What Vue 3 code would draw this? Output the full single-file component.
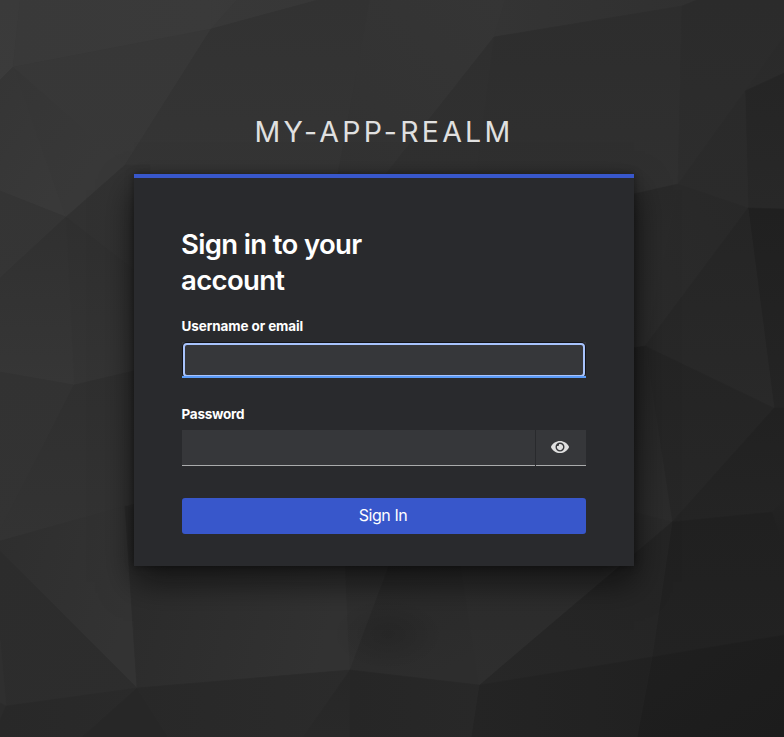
<script setup>
import { ref } from 'vue'

const username = ref('')
const password = ref('')
const revealed = ref(false)

// Each facet: outline, start colour, end colour, gradient direction (x1 y1 x2 y2)
const facets = [
  ['0,0 20,0 13,67 0,80', '#3a3a3a', '#3b3b3b', '0 0 0 1'],
  ['20,0 212,0 211,29 13,67', '#393939', '#3a3a3a', '0 0 1 0'],
  ['212,0 237,0 211,29', '#3a3a3a', '#393939', '0 0 1 0'],
  ['237,0 318,0 211,29', '#383838', '#373737', '0 0 1 0'],
  ['0,80 13,67 66,217 0,191', '#353535', '#393939', '0 0 .6 1'],
  ['13,67 211,29 125,165 66,217', '#373737', '#383838', '0 0 0 1'],
  ['13,67 125,165 66,217', '#353535', '#383838', '0 0 .7 .7'],
  ['211,29 318,0 370,0 336,184 134,184 125,165', '#323232', '#353535', '0 0 0 1'],
  ['370,0 505,0 494,37 378,184 336,184', '#323232', '#353535', '0 1 1 0'],
  ['505,0 697,0 682,6 494,37', '#343434', '#303030', '0 0 1 0'],
  ['494,37 475,184 378,184', '#2f2f2f', '#303030', '0 0 0 1'],
  ['494,37 682,6 678,184 634,195 475,184', '#2d2d2d', '#303030', '0 0 0 1'],
  ['682,6 697,0 784,0 784,36 745,91 678,184', '#2b2b2b', '#2d2d2d', '0 0 0 1'],
  ['784,36 784,73 745,91', '#2a2a2a', '#2b2b2b', '0 0 0 1'],
  ['745,91 784,73 784,209 748,208', '#252525', '#282828', '0 0 0 1'],
  ['745,91 748,208 678,184', '#2a2a2a', '#2b2b2b', '0 0 0 1'],
  ['678,184 748,208 645,346', '#282828', '#2b2b2b', '1 0 0 1'],
  ['678,184 645,346 620,350 620,197', '#292929', '#2c2c2c', '0 0 0 1'],
  ['748,208 784,209 784,408 774,408', '#202020', '#242424', '0 0 0 1'],
  ['748,208 774,408 645,346', '#252525', '#292929', '0 0 0 1'],
  ['645,346 774,408 672,522', '#242424', '#272727', '0 0 0 1'],
  ['620,350 645,346 672,522 620,508', '#242424', '#2c2c2c', '0 0 0 1'],
  ['774,408 784,408 784,500 772,512 672,522', '#212121', '#242424', '0 0 0 1'],
  ['784,500 784,545 772,512', '#232323', '#202020', '0 0 0 1'],
  ['620,508 672,522 620,565', '#2a2a2a', '#292929', '0 0 0 1'],
  ['672,522 772,512 784,545 784,635 652,657', '#202020', '#222222', '0 0 0 1'],
  ['672,522 652,657 479,685', '#242424', '#272727', '1 0 0 1'],
  ['652,657 784,635 784,737 637,737', '#1f1f1f', '#1c1c1c', '0 0 1 1'],
  ['479,685 652,657 637,737 471,737', '#242424', '#212121', '0 0 1 0'],
  ['66,217 125,165 150,165 150,282', '#313131', '#323232', '0 0 1 0'],
  ['66,217 150,282 150,367 74,385', '#2f2f2f', '#343434', '0 0 0 1'],
  ['0,191 66,217 0,278', '#343434', '#353535', '0 0 0 1'],
  ['66,217 74,385 0,372 0,278', '#303030', '#363636', '.5 0 .5 1'],
  ['0,372 74,385 0,530', '#323232', '#333333', '0 0 0 1'],
  ['74,385 0,530 0,541 150,499 150,367', '#2f2f2f', '#333333', '0 0 0 1'],
  ['0,541 125,506 137,688 0,551', '#2e2e2e', '#333333', '0 0 1 .4'],
  ['0,551 137,688 6,706 0,640', '#2c2c2c', '#2d2d2d', '0 0 1 1'],
  ['0,640 6,706 0,703', '#2f2f2f', '#2f2f2f', '0 0 0 1'],
  ['0,703 6,706 0,720', '#2b2b2b', '#2b2b2b', '0 0 0 1'],
  ['0,720 6,706 137,688 82,737 0,737', '#282828', '#2a2a2a', '0 0 1 0'],
  ['82,737 137,688 168,737', '#272727', '#272727', '0 0 0 1'],
  ['125,506 345,560 350,670 137,688', '#2b2b2b', '#323232', '0 0 1 .2'],
  ['137,688 350,670 303,737 168,737', '#282828', '#2b2b2b', '0 0 1 0'],
  ['345,560 391,560 350,670', '#2e2e2e', '#303030', '0 0 0 1'],
  ['350,670 391,560 460,560 479,685', '#292929', '#2d2d2d', '0 0 .5 1'],
  ['460,560 625,560 479,685', '#2c2c2c', '#2e2e2e', '0 0 0 1'],
  ['350,670 350,737 303,737', '#272727', '#292929', '0 0 0 1'],
  ['350,670 479,685 471,737 350,737', '#262626', '#282828', '0 0 1 0']
].map(([points, from, to, dir]) => {
  const [x1, y1, x2, y2] = dir.split(' ')
  return { points, from, to, x1, y1, x2, y2 }
})
</script>

<template>
  <div class="page">
    <svg class="backdrop" viewBox="0 0 784 737" preserveAspectRatio="xMidYMid slice" aria-hidden="true">
      <defs>
        <linearGradient v-for="(f, i) in facets" :id="'facet' + i" :key="i" :x1="f.x1" :y1="f.y1" :x2="f.x2" :y2="f.y2">
          <stop offset="0" :stop-color="f.from" />
          <stop offset="1" :stop-color="f.to" />
        </linearGradient>
        <radialGradient id="shade">
          <stop offset="0" stop-color="#000" stop-opacity=".12" />
          <stop offset="1" stop-color="#000" stop-opacity="0" />
        </radialGradient>
      </defs>
      <rect width="784" height="737" fill="#2d2d2d" />
      <polygon v-for="(f, i) in facets" :key="i" :points="f.points" :fill="`url(#facet${i})`" :stroke="`url(#facet${i})`" stroke-width=".6" />
      <ellipse cx="388" cy="634" rx="56" ry="36" fill="url(#shade)" />
    </svg>

    <header class="realm">my-app-realm</header>

    <main class="card">
      <h1 class="title">Sign in to your account</h1>
      <form class="form" @submit.prevent>
        <label class="label" for="username">Username or email</label>
        <div class="field focused">
          <input id="username" v-model="username" class="input" type="text" autocomplete="off" />
        </div>

        <label class="label second" for="password">Password</label>
        <div class="group">
          <input id="password" v-model="password" class="input lined" :type="revealed ? 'text' : 'password'" autocomplete="off" />
          <button class="toggle" type="button" @click="revealed = !revealed">
            <svg class="eye" viewBox="0 0 576 512" aria-hidden="true">
              <path fill-rule="evenodd" d="M572.5 241.4C518.3 135.6 410.9 64 288 64S57.7 135.6 3.5 241.4a32.35 32.35 0 0 0 0 29.2C57.7 376.4 165 448 288 448s230.3-71.6 284.5-177.4a32.35 32.35 0 0 0 0-29.2zM288 400a144 144 0 1 1 0-288 144 144 0 0 1 0 288z" />
              <path d="M288 156a100 100 0 1 1-94 66 46 46 0 0 0 62-60 100 100 0 0 1 32-6z" />
            </svg>
          </button>
        </div>

        <button class="submit" type="submit">Sign In</button>
      </form>
    </main>
  </div>
</template>

<style>
body {
  background: #2d2d2d;
}
</style>

<style scoped>
.page {
  position: relative;
  box-sizing: border-box;
  height: 100vh;
  overflow: hidden;
  display: flex;
  flex-direction: column;
  align-items: center;
  padding: 110px 16px 0 0;
  font-family: Inter, "Liberation Sans", sans-serif;
  color: #fff;
}
.backdrop {
  position: absolute;
  inset: 0;
  width: 100%;
  height: 100%;
}
.realm {
  position: relative;
  height: 64px;
  line-height: 44px;
  font-size: 28.5px;
  letter-spacing: 3.25px;
  text-transform: uppercase;
  color: #e0e0e0;
  white-space: nowrap;
}
.card {
  position: relative;
  box-sizing: border-box;
  width: 500px;
  height: 392px;
  padding: 48px 48px 32px;
  border-top: 4px solid #3857cb;
  background: #292a2d;
  box-shadow: 0 16px 32px rgba(3, 3, 3, 0.6), 0 0 8px rgba(3, 3, 3, 0.4);
}
.title {
  width: 230px;
  margin: 0 0 18px -1px;
  font-size: 27.5px;
  line-height: 36px;
  font-weight: 600;
  letter-spacing: -0.65px;
}
.form {
  display: flex;
  flex-direction: column;
}
.label {
  height: 26px;
  line-height: 20px;
  margin-left: -0.5px;
  font-size: 13.5px;
  font-weight: 700;
  letter-spacing: -0.1px;
}
.label.second {
  margin-top: 26px;
  letter-spacing: -0.25px;
}
.field {
  position: relative;
  display: flex;
  height: 36px;
}
.focused::before {
  content: "";
  position: absolute;
  inset: 1px;
  border: 2px solid #a8c3fc;
  border-radius: 4px;
  box-shadow: 0 0 0 1px #121318;
  pointer-events: none;
}
.focused::after {
  content: "";
  position: absolute;
  left: 0;
  right: 0;
  bottom: 0;
  height: 2px;
  background: #5b9bf8;
}
.input {
  box-sizing: border-box;
  flex: 1;
  min-width: 0;
  margin: 0;
  padding: 0 8px;
  border: 0;
  border-radius: 0;
  outline: none;
  background: #36373a;
  color: #e0e0e0;
  font: inherit;
  font-size: 16px;
}
.group {
  display: flex;
  gap: 1px;
  height: 36px;
}
.lined {
  border-bottom: 1px solid #aaabac;
}
.toggle {
  display: flex;
  align-items: center;
  justify-content: center;
  box-sizing: border-box;
  width: 50px;
  padding: 0 2px 2px 0;
  border: 0 solid #aaabac;
  border-bottom-width: 1px;
  background: #36373a;
}
.eye {
  width: 18px;
  height: 16px;
  fill: #e0e0e0;
}
.submit {
  height: 36px;
  margin-top: 32px;
  padding: 0 2px 2px 0;
  border: 0;
  border-radius: 3px;
  background: #3857cb;
  color: #fff;
  font: inherit;
  font-size: 16px;
  letter-spacing: -0.45px;
}
</style>
